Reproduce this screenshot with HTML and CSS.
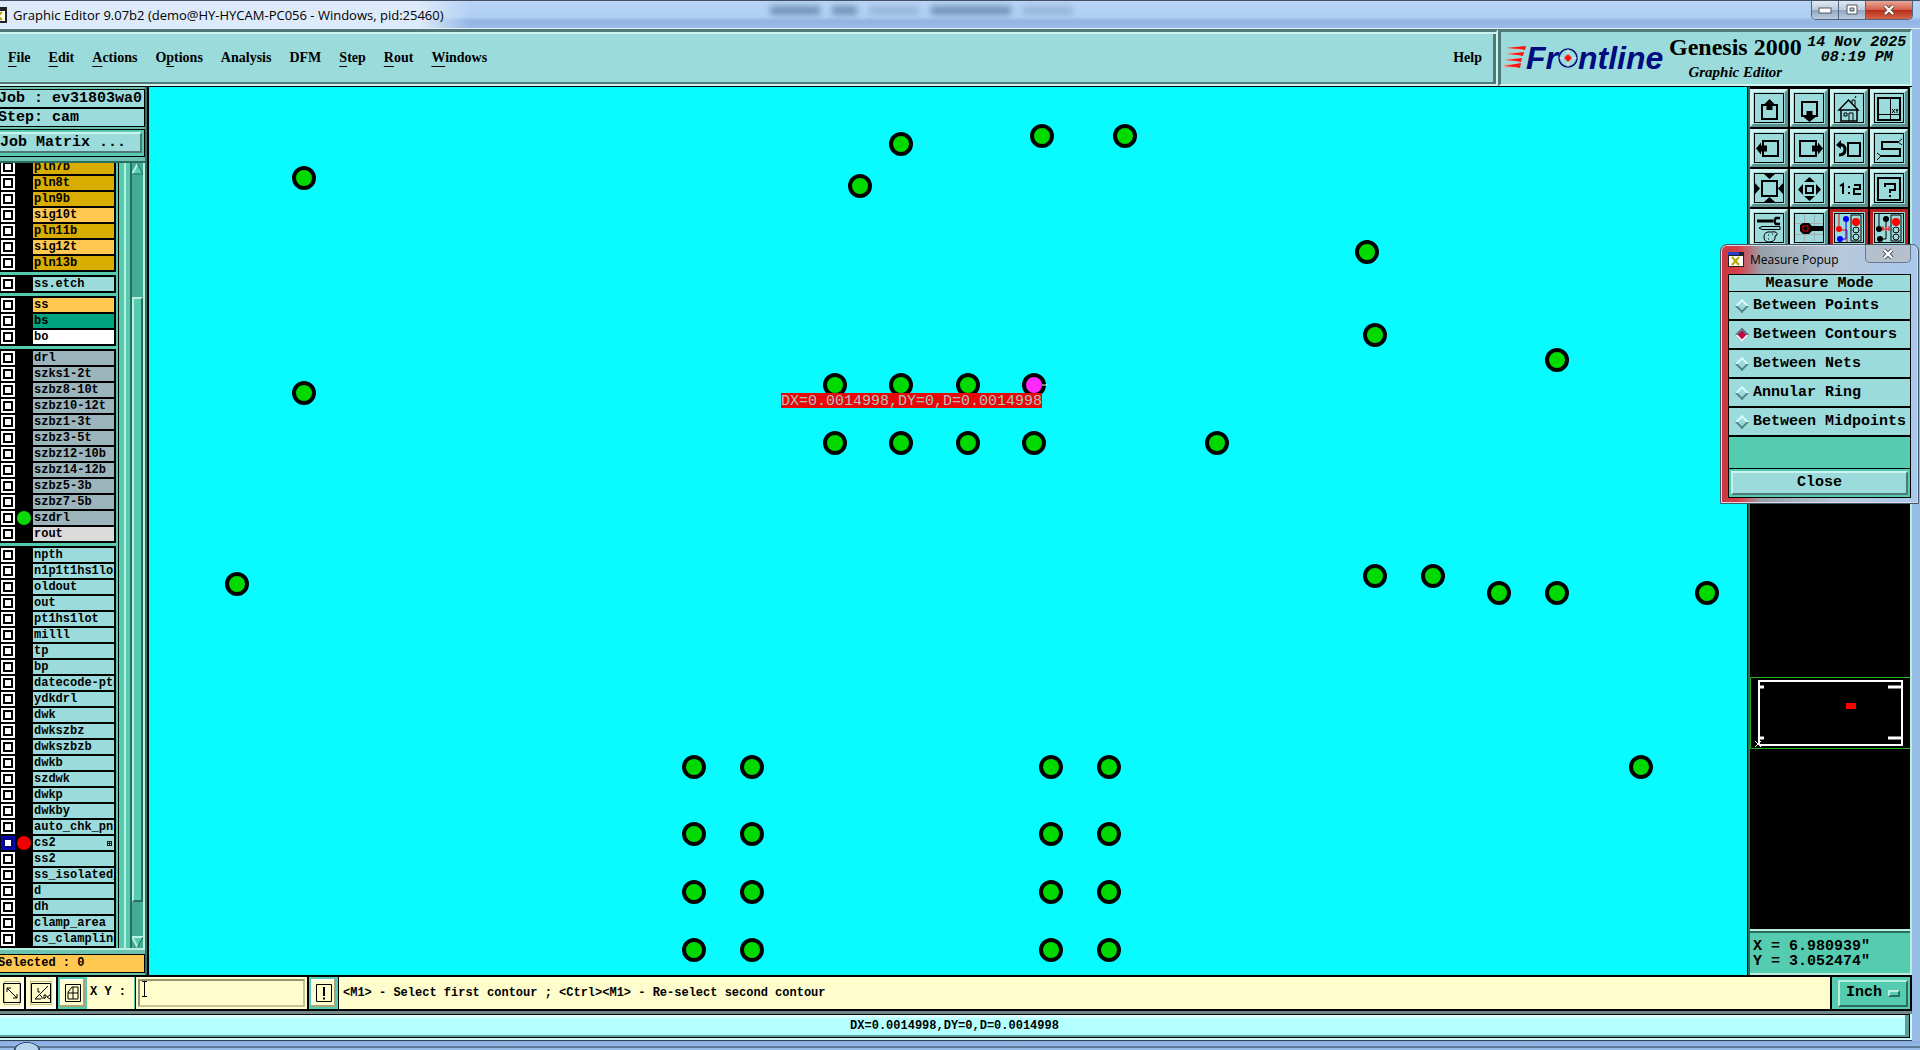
FILE: index.html
```html
<!DOCTYPE html>
<html lang="en">
<head>
<meta charset="utf-8">
<title>Graphic Editor 9.07b2</title>
<link rel="stylesheet" href="styles.css">
</head>
<body>
<div class="titlebar">
  <svg class="appicon" width="16" height="16"><rect width="16" height="16" fill="#222"/><rect x="1" y="4" width="13" height="10" fill="#fff"/><path d="M3 5l8 8M11 5l-8 8" stroke="#b8a800" stroke-width="2"/></svg>
  <h1>Graphic Editor 9.07b2 (demo@HY-HYCAM-PC056 - Windows, pid:25460)</h1>
  <div class="haze"><i class="w50"></i><i class="w25"></i><i class="w50 faint"></i><i class="w80"></i><i class="w50 faint"></i></div>
  <div class="winbtns">
    <button aria-label="Minimize"><svg width="14" height="12"><rect x="1" y="4" width="12" height="5" fill="#fff" stroke="#556"/></svg></button>
    <button aria-label="Maximize"><svg width="14" height="12"><path d="M2 1h10v9H2zM5 4v3h4V4z" fill="#fff" fill-rule="evenodd" stroke="#556"/></svg></button>
    <button class="x" aria-label="Close window"><svg width="14" height="12"><path d="M3 2l8 8M11 2l-8 8" stroke="#543" stroke-width="4"/><path d="M3 2l8 8M11 2l-8 8" stroke="#fff" stroke-width="2.4"/></svg></button>
  </div>
</div>
<header>
  <nav>
    <button><u>F</u>ile</button><button><u>E</u>dit</button><button><u>A</u>ctions</button><button>O<u>p</u>tions</button><button>Analysis</button><button>DFM</button><button><u>S</u>tep</button><button><u>R</u>out</button><button><u>W</u>indows</button><button class="help">Help</button>
  </nav>
  <div class="brand">
    <div class="logo">
      <svg class="speed" width="22" height="24"><g fill="#f8a090"><path d="M5 1h14v3H9zM3 6h14v3H3zM1 12h14v3H1zM0 18h14v4H0z" opacity=".45"/></g><path d="M2 2l20-2-1 4-5-1zM4 8l16-2-1 4-5-1zM2 14l16-2-1 4-5-1zM0 20l17-3-1 5-5-1z" fill="#f11"/></svg><span>Fr</span><svg class="target" width="20" height="20" role="img" aria-label="o"><circle cx="10" cy="10" r="9" fill="none" stroke="#00107c" stroke-width="1.5"/><path d="M10 1v18M1 10h18" stroke="#fff" opacity=".6"/><path d="M10 6l4 4-4 4-4-4z" fill="#f11"/></svg><span>ntline</span>
    </div>
    <div class="product"><strong>Genesis 2000</strong><em>Graphic Editor</em></div>
    <div class="clock">14 Nov 2025<br>08:19 PM</div>
  </div>
</header>
<main>
  <aside class="left">
    <div class="cell">Job : ev31803wa0</div>
    <div class="cell">Step: cam</div>
    <div class="matrix"><button>Job Matrix ...</button></div>
    <div class="layers">
      <div class="list">
        <div class="group">
          <label><input type="checkbox"><i></i><span class="pln">pln7b</span></label>
          <label><input type="checkbox"><i></i><span class="pln">pln8t</span></label>
          <label><input type="checkbox"><i></i><span class="pln">pln9b</span></label>
          <label><input type="checkbox"><i></i><span class="sig">sig10t</span></label>
          <label><input type="checkbox"><i></i><span class="pln">pln11b</span></label>
          <label><input type="checkbox"><i></i><span class="sig">sig12t</span></label>
          <label><input type="checkbox"><i></i><span class="pln">pln13b</span></label>
        </div>
        <div class="group">
          <label><input type="checkbox"><i></i><span>ss.etch</span></label>
        </div>
        <div class="group">
          <label><input type="checkbox"><i></i><span class="sig">ss</span></label>
          <label><input type="checkbox"><i></i><span class="mask">bs</span></label>
          <label><input type="checkbox"><i></i><span class="white">bo</span></label>
        </div>
        <div class="group">
          <label><input type="checkbox"><i></i><span class="drill">drl</span></label>
          <label><input type="checkbox"><i></i><span class="drill">szks1-2t</span></label>
          <label><input type="checkbox"><i></i><span class="drill">szbz8-10t</span></label>
          <label><input type="checkbox"><i></i><span class="drill">szbz10-12t</span></label>
          <label><input type="checkbox"><i></i><span class="drill">szbz1-3t</span></label>
          <label><input type="checkbox"><i></i><span class="drill">szbz3-5t</span></label>
          <label><input type="checkbox"><i></i><span class="drill">szbz12-10b</span></label>
          <label><input type="checkbox"><i></i><span class="drill">szbz14-12b</span></label>
          <label><input type="checkbox"><i></i><span class="drill">szbz5-3b</span></label>
          <label><input type="checkbox"><i></i><span class="drill">szbz7-5b</span></label>
          <label><input type="checkbox"><i class="green"></i><span class="drill">szdrl</span></label>
          <label><input type="checkbox"><i></i><span class="rout">rout</span></label>
        </div>
        <div class="group">
          <label><input type="checkbox"><i></i><span>npth</span></label>
          <label><input type="checkbox"><i></i><span>n1p1t1hs1lot</span></label>
          <label><input type="checkbox"><i></i><span>oldout</span></label>
          <label><input type="checkbox"><i></i><span>out</span></label>
          <label><input type="checkbox"><i></i><span>pt1hs1lot</span></label>
          <label><input type="checkbox"><i></i><span>milll</span></label>
          <label><input type="checkbox"><i></i><span>tp</span></label>
          <label><input type="checkbox"><i></i><span>bp</span></label>
          <label><input type="checkbox"><i></i><span>datecode-pto</span></label>
          <label><input type="checkbox"><i></i><span>ydkdrl</span></label>
          <label><input type="checkbox"><i></i><span>dwk</span></label>
          <label><input type="checkbox"><i></i><span>dwkszbz</span></label>
          <label><input type="checkbox"><i></i><span>dwkszbzb</span></label>
          <label><input type="checkbox"><i></i><span>dwkb</span></label>
          <label><input type="checkbox"><i></i><span>szdwk</span></label>
          <label><input type="checkbox"><i></i><span>dwkp</span></label>
          <label><input type="checkbox"><i></i><span>dwkby</span></label>
          <label><input type="checkbox"><i></i><span>auto_chk_pnl</span></label>
          <label><input type="checkbox" checked><i class="red"></i><span class="snap">cs2<svg width="5" height="5"><path d="M0 .5h5M0 2.5h5M0 4.5h5M.5 0v5M2.5 0v5M4.5 0v5" stroke="#000" stroke-width=".8"/></svg></span></label>
          <label><input type="checkbox"><i></i><span>ss2</span></label>
          <label><input type="checkbox"><i></i><span>ss_isolated_</span></label>
          <label><input type="checkbox"><i></i><span>d</span></label>
          <label><input type="checkbox"><i></i><span>dh</span></label>
          <label><input type="checkbox"><i></i><span>clamp_area</span></label>
          <label><input type="checkbox"><i></i><span>cs_clampline</span></label>
        </div>
      </div>
      <div class="rails"></div>
      <div class="scroll">
        <svg width="11" height="12"><path d="M5.500 1L0 11h11z" fill="#55ccb0"/><path d="M5.500 1L0 11" stroke="#b8f4e4" stroke-width="2"/><path d="M0 11h11L5.500 1" fill="none" stroke="#226a5c"/></svg>
        <div class="thumb"></div>
        <svg width="11" height="12"><path d="M0 1h11L5.500 11z" fill="#55ccb0"/><path d="M5.500 11L0 1h11" fill="none" stroke="#b8f4e4" stroke-width="2"/><path d="M11 1L5.500 11" stroke="#226a5c"/></svg>
      </div>
    </div>
    <div class="cell selected">Selected : 0</div>
  </aside>
  <section class="canvas">
    <svg class="pads" width="100%" height="100%">
      <g class="pad">
        <circle cx="155" cy="91" r="10"/><circle cx="752" cy="57" r="10"/><circle cx="711" cy="99" r="10"/><circle cx="893" cy="49" r="10"/><circle cx="976" cy="49" r="10"/>
        <circle cx="1218" cy="165" r="10"/><circle cx="1226" cy="248" r="10"/><circle cx="1408" cy="273" r="10"/><circle cx="155" cy="306" r="10"/><circle cx="88" cy="497" r="10"/>
        <circle cx="686" cy="298" r="10"/><circle cx="752" cy="298" r="10"/><circle cx="819" cy="298" r="10"/><circle class="picked" cx="885" cy="298" r="10"/>
        <circle cx="686" cy="356" r="10"/><circle cx="752" cy="356" r="10"/><circle cx="819" cy="356" r="10"/><circle cx="885" cy="356" r="10"/><circle cx="1068" cy="356" r="10"/>
        <circle cx="1226" cy="489" r="10"/><circle cx="1284" cy="489" r="10"/><circle cx="1350" cy="506" r="10"/><circle cx="1408" cy="506" r="10"/><circle cx="1558" cy="506" r="10"/>
        <circle cx="545" cy="680" r="10"/><circle cx="603" cy="680" r="10"/><circle cx="902" cy="680" r="10"/><circle cx="960" cy="680" r="10"/><circle cx="1492" cy="680" r="10"/>
        <circle cx="545" cy="747" r="10"/><circle cx="603" cy="747" r="10"/><circle cx="902" cy="747" r="10"/><circle cx="960" cy="747" r="10"/>
        <circle cx="545" cy="805" r="10"/><circle cx="603" cy="805" r="10"/><circle cx="902" cy="805" r="10"/><circle cx="960" cy="805" r="10"/>
        <circle cx="545" cy="863" r="10"/><circle cx="603" cy="863" r="10"/><circle cx="902" cy="863" r="10"/><circle cx="960" cy="863" r="10"/>
      </g>
      <path d="M893 298h5" stroke="#fff"/>
    </svg>
    <output class="measure">DX=0.0014998,DY=0,D=0.0014998</output>
  </section>
  <aside class="right">
    <div class="tools">
      <button aria-label="Pan up"><svg viewBox="1 1 28 28"><path d="M8 12h15v14H8z" fill="none" stroke="#000" stroke-width="2"/><path d="M15.500 6l6 6h-3v5h-6v-5h-3z"/></svg></button>
      <button aria-label="Pan down"><svg viewBox="1 1 28 28"><path d="M8 9h15v14H8z" fill="none" stroke="#000" stroke-width="2"/><path d="M15.500 29l-6-5h3v-6h6v6h3z"/></svg></button>
      <button aria-label="Home"><svg viewBox="1 1 28 28" fill="none" stroke="#000"><path d="M5 17L14.500 7 24 17zM7 17v11h16V17" stroke-width="1.500"/><path d="M15 28v-8h4v8M10 20h3v3h-3zM18 10V7h3v7M21 5l1-2"/></svg></button>
      <button aria-label="Zoom XY"><svg viewBox="1 1 28 28" fill="none" stroke="#000"><path d="M4 5h22v22H4z" stroke-width="2"/><path d="M16.500 5v22M4 21.500h22M18 16l3 4M21 16l-3 4M22 16l1 2 1-2M23 18v2"/></svg></button>
      <button aria-label="Pan left"><svg viewBox="1 1 28 28"><path d="M9 8h15v15H9z" fill="none" stroke="#000" stroke-width="2"/><path d="M2 15.500l5-6v3h6v6H7v3z"/></svg></button>
      <button aria-label="Pan right"><svg viewBox="1 1 28 28"><path d="M6 8h16v15H6z" fill="none" stroke="#000" stroke-width="2"/><path d="M29 15.500l-5-6v3h-6v6h6v3z"/></svg></button>
      <button aria-label="Previous view"><svg viewBox="1 1 28 28" fill="none" stroke="#000"><path d="M14 10h12v13H14z" stroke-width="2"/><path d="M5 12q6-1 6 4.500T5 22" stroke-width="3"/><path d="M2 12l5-5v9z" fill="#000" stroke="none"/></svg></button>
      <button aria-label="Snake"><svg viewBox="1 1 28 28" fill="none" stroke="#000"><path d="M24 9H8v7h18v7H7" stroke-width="2"/><path d="M28 6l-4 3 4 3M3 20l4 3-4 4"/></svg></button>
      <button aria-label="Zoom out"><svg viewBox="1 1 28 28"><path d="M8 8h15v15H8z" fill="none" stroke="#000" stroke-width="2"/><path d="M10 1h11l-5.500 5zM10 29h11l-5.500-5zM1 10v11l5-5.500zM29 10v11l-5-5.500z"/></svg></button>
      <button aria-label="Zoom in"><svg viewBox="1 1 28 28"><path d="M12 13h7v7h-7z" fill="none" stroke="#000" stroke-width="2"/><path d="M10 9h11l-5.500-5zM10 23h11l-5.500 5zM9 11v11l-5-5.500zM22 11v11l5-5.500z"/></svg></button>
      <button class="ratio" aria-label="Scale 1:2"><svg viewBox="1 1 28 28" fill="none" stroke="#000" stroke-width="2"><path d="M6 13l3-2v10M20 12h6v4h-6v5h7M15 13v2M15 19v2"/></svg></button>
      <button aria-label="Help"><svg viewBox="1 1 28 28" fill="none" stroke="#000" stroke-width="2"><path d="M4 5h22v22H4zM11 14v-3h10v6h-5v3M16 22v2"/></svg></button>
      <button aria-label="Setup"><svg viewBox="1 1 28 28" fill="none" stroke="#000"><path d="M3 8h16" stroke-width="3"/><path d="M26 5h-4q-3 3 0 6h4" stroke-width="2.500"/><path d="M5 15l3-1.500h18v3H8z"/><path d="M10 24q0-6 7-5 7-1 6 3-3 0-2 4-1 3-6 3-5 0-5-5zM14 22h1M18 21h1M14 26h1"/></svg></button>
      <button aria-label="Snap"><svg viewBox="1 1 28 28"><path d="M10.500 1v28M20.500 1v28M1 10.500h28M1 21.500h28" stroke="#a4b0b0"/><path d="M6 12l3-2h6l3 3h11v5H18l-3 3H9l-3-3z"/><path d="M9 13h5v5H9z" fill="none" stroke="#f00"/></svg></button>
      <button class="hot" aria-label="Net check"><svg viewBox="1 1 28 28" fill="none"><path d="M5 1v16h8v12" stroke="#f00"/><path d="M12 6v20H6" stroke="#00f"/><g fill="#00f"><circle cx="12" cy="6" r="3"/><circle cx="6" cy="26" r="3"/></g><circle cx="5" cy="16" r="3" fill="#f00"/><path d="M17 2h10v26H17z" stroke="#000"/><circle cx="22" cy="9" r="4" fill="#f00"/><circle cx="22" cy="17" r="3" stroke="#000"/><circle cx="22" cy="24" r="3" stroke="#000"/></svg></button>
      <button class="hot" aria-label="Distance check"><svg viewBox="1 1 28 28" fill="none"><path d="M5 1v14M12 6v8M12 18v8H6" stroke="#000"/><path d="M9 18v-5m3 5v-5m3 5v-5M8 16h7" stroke="#f00"/><g fill="#000"><circle cx="12" cy="6" r="3"/><circle cx="6" cy="26" r="3"/><circle cx="5" cy="16" r="3"/></g><path d="M17 2h10v26H17z" stroke="#000"/><circle cx="22" cy="9" r="4" fill="#f00"/><circle cx="22" cy="17" r="3" stroke="#000"/><circle cx="22" cy="24" r="3" stroke="#000"/></svg></button>
    </div>
    <div class="navigator">
      <svg width="160" height="72"><path d="M160 .5H.5v71H160" fill="none" stroke="#1fb41f"/><path d="M9 67V4h143v64H9" fill="none" stroke="#fff" stroke-width="2"/><path d="M8 10h6M138 10h14M8 61h6M138 61h14" stroke="#fff" stroke-width="3"/><path d="M5 64l6 6M11 64l-6 6" stroke="#fff"/><rect x="96" y="26" width="10" height="6" fill="#f00"/></svg>
    </div>
    <div class="xy">X = 6.980939"<br>Y = 3.052474"</div>
  </aside>
</main>
<div class="cmdbar">
  <button class="flat" aria-label="Line mode"><svg width="18" height="20"><path d="M.5.5h17v19H.5z M4 5l10 10M4 9V5h4M14 11v4h-4" fill="none" stroke="#000"/></svg></button>
  <button class="flat" aria-label="Angle mode"><svg width="20" height="20"><path d="M.5.5h19v19H.5zM17 3L4 16h6M7 5v4h2M9 12q3 2 2 4M13 12v4l2-2v-2zM19 12l-3 2 3 2" fill="none" stroke="#000"/></svg></button>
  <button class="raised" aria-label="Grid"><svg width="16" height="18"><path d="M.5.5h15v17H.5zM3 8l4-5h6v12H3zM8 3v12M3 9h10" fill="none" stroke="#000"/></svg></button>
  <label for="xy">X Y :</label>
  <div class="field"><input id="xy" type="text"><svg class="caret" width="7" height="16"><path d="M1 .5h5M3.500 0v15M1 15.500h5" stroke="#000"/></svg></div>
  <button class="raised" aria-label="Alert"><svg width="16" height="18"><path d="M.5.5h15v17H.5z" fill="none" stroke="#000"/><path d="M8 3v9M8 13.500v2" stroke="#000" stroke-width="2"/></svg></button>
  <p>&lt;M1&gt; - Select first contour ; &lt;Ctrl&gt;&lt;M1&gt; - Re-select second contour</p>
  <div class="unit"><select aria-label="Unit"><option>Inch</option><option>mm</option></select><i></i></div>
</div>
<footer><div class="status">DX=0.0014998,DY=0,D=0.0014998</div></footer>
<div class="orb"></div>

<section class="popup">
  <div class="ptitle"><svg width="16" height="15"><rect width="16" height="15" fill="#222"/><rect width="11" height="3" fill="#24c"/><rect x="1" y="4" width="14" height="10" fill="#fff"/><path d="M4 5l7 8M11 5l-7 8" stroke="#b8a800" stroke-width="2"/></svg><h2>Measure Popup</h2><button aria-label="Close popup"><svg width="14" height="12"><path d="M3 2l8 8M11 2l-8 8" stroke="#445" stroke-width="4"/><path d="M3 2l8 8M11 2l-8 8" stroke="#fff" stroke-width="2.400"/></svg></button></div>
  <div class="pbody">
    <fieldset>
      <legend>Measure Mode</legend>
      <label><input type="radio" name="m">Between Points</label>
      <label><input type="radio" name="m" checked>Between Contours</label>
      <label><input type="radio" name="m">Between Nets</label>
      <label><input type="radio" name="m">Annular Ring</label>
      <label><input type="radio" name="m">Between Midpoints</label>
    </fieldset>
    <div class="closebox"><button>Close</button></div>
  </div>
</section>
</body>
</html>
```
FILE: styles.css
```css
* { box-sizing: border-box; }
:root {
  --panel: #9cdbdb;
  --light: #ccf4f0;
  --dark: #507878;
  --green: #55ccb0;
  --glight: #b8f0e0;
  --gdark: #2a6e60;
  --cream: #fffdcc;
  --mono: "Liberation Mono", "Courier New", monospace;
  --serif: "Liberation Serif", "Times New Roman", serif;
  --ui: "Open Sans", "Segoe UI", sans-serif;
}
body {
  margin: 0;
  height: 100vh;
  display: flex;
  flex-direction: column;
  overflow: hidden;
  position: relative;
  background: #98bde6;
  font: bold 15px/18px var(--mono);
  color: #000;
}
button { font: inherit; color: inherit; margin: 0; padding: 0; border: 0; cursor: pointer; }
svg { display: block; }

/* window title */
.titlebar {
  flex: none;
  height: 29px;
  display: flex;
  align-items: center;
  border-top: 1px solid #445066;
  border-bottom: 1px solid #e4f0fa;
  background:
    linear-gradient(90deg, #dceafa 0, #dceafa 420px, transparent 470px),
    linear-gradient(#b8d4f6 0, #b0cff4 16px, #94b4e2 20px, #98bce8);
}
.appicon { flex: none; margin-left: -9px; }
.titlebar h1 { flex: 8 1 0; margin: 0 0 0 6px; font: 13px/24px var(--ui); white-space: nowrap; }
.haze { flex: 11 1 0; height: 24px; display: flex; gap: 12px; filter: blur(3px); }
.haze i { height: 9px; margin-top: 3px; background: #58789c; opacity: .7; }
.haze .faint { opacity: .3; }
.haze .w25 { width: 25px; }
.haze .w50 { width: 50px; }
.haze .w80 { width: 80px; }
.winbtns { display: flex; align-self: flex-start; margin-right: 7px; border: 1px solid #53647e; border-top: 0; border-radius: 0 0 5px 5px; overflow: hidden; }
.winbtns button { width: 27px; height: 18px; display: grid; place-items: center; border-right: 1px solid #53647e; background: linear-gradient(#e0e9f3, #bccbdc 48%, #8fa3bc 50%, #bccde0); }
.winbtns .x { width: 46px; border: 0; background: linear-gradient(#eaa79a, #d2604c 48%, #b52c18 50%, #d8644c); }

/* menu and brand */
header { flex: none; display: flex; height: 58px; margin-right: 8px; border-bottom: 1px solid #000; background: var(--panel); }
nav { flex: 1; display: flex; align-items: center; gap: 18px; padding-left: 8px; border-top: 3px solid var(--dark); border-right: 2px solid var(--light); border-bottom: 2px solid var(--light); box-shadow: inset 0 2px var(--light), inset -3px -2px var(--dark); font: bold 14px/18px var(--serif); }
nav button { background: none; }
nav u { text-decoration: underline; text-underline-offset: 4px; }
.help { margin-left: auto; margin-right: 14px; }
.brand { flex: none; width: 414px; display: flex; padding-left: 3px; border: 3px solid var(--dark); border-right: 2px solid var(--light); border-bottom: 2px solid var(--light); }
.logo { display: flex; align-items: center; font: italic bold 32px/48px "Liberation Sans", Arial, sans-serif; color: #000c80; }
.product { display: flex; flex-direction: column; align-items: center; margin-left: 4px; width: 136px; font-family: var(--serif); white-space: nowrap; }
.product strong { font-size: 24px; line-height: 30px; }
.product em { font-size: 15px; line-height: 20px; }
.clock { flex: 1; text-align: center; font-style: italic; line-height: 15px; padding-top: 3px; white-space: nowrap; }

main { flex: 1; min-height: 0; display: flex; margin-right: 8px; }

/* layer panel */
.left { flex: none; width: 149px; display: flex; flex-direction: column; padding-top: 2px; background: #6cc4b0; border-right: 2px solid #000; white-space: nowrap; overflow: hidden; box-shadow: inset -2px 0 #2c7466; }
.cell { flex: none; height: 19px; width: 145px; line-height: 18px; text-indent: -2px; background: var(--panel); border: 1px solid #000; border-left: 0; }
.matrix { flex: none; width: 145px; margin: 2px 0 4px; padding: 2px 2px 3px 0; border: 1px solid #000; border-left: 0; background: var(--green); }
.matrix button { display: block; width: 100%; height: 21px; text-align: left; background: var(--panel); border: 2px solid var(--dark); border-left: 0; border-top-color: var(--light); line-height: 18px; }
.layers { flex: 1; min-height: 0; display: flex; width: 145px; border-top: 2px solid var(--gdark); border-bottom: 2px solid var(--glight); background: var(--green); }
.list { width: 116px; display: flex; flex-direction: column; justify-content: flex-end; gap: 3px; overflow: hidden; font-size: 12px; line-height: 14px; }
.group { flex: none; display: flex; flex-direction: column; gap: 2px; padding: 2px 2px 2px 1px; background: #000; }
.group label { display: flex; height: 14px; }
.group input { flex: none; appearance: none; width: 14px; height: 14px; margin: 0; border: 2px solid #fff; background: #fff; box-shadow: inset 0 0 0 2px #000; }
.group input:checked { border-color: #0808b0; box-shadow: inset 0 0 0 2px #000080; }
.group i { flex: none; width: 14px; height: 14px; margin: 0 2px; border-radius: 7px; }
.group .green { background: #0bd90b; }
.group .red { background: #f00000; }
.group span { flex: 1; padding-left: 1px; overflow: hidden; background: var(--panel); }
.group .pln { background: #d8ac00; }
.group .sig { background: #ffc850; }
.group .mask { background: #00a480; }
.group .white { background: #fff; }
.group .drill { background: #9cb4bc; }
.group .rout { background: #dadada; }
.group .snap { display: flex; justify-content: space-between; align-items: center; padding-right: 2px; }
.rails { width: 14px; margin-left: 2px; border-left: 1px solid #000; border-right: 2px solid var(--gdark); background: linear-gradient(90deg, var(--green) 5px, var(--glight) 5px 7px, var(--green) 7px); }
.scroll { flex: 1; display: flex; flex-direction: column; justify-content: space-between; border-right: 2px solid var(--glight); background: #44ac94; }
.thumb { flex: none; height: 77%; margin-top: 108px; border: 2px solid var(--gdark); border-top-color: var(--glight); border-left-color: var(--glight); background: var(--green); }
.scroll svg:last-child { margin-top: 20px; }
.selected { margin: 4px 0 2px; background: #ffc850; font-size: 12px; line-height: 17px; }

/* artwork */
.canvas { flex: 1; min-width: 0; position: relative; overflow: hidden; background: #08fcff; }
.pads { position: absolute; inset: 0; }
.pad circle { fill: #00da00; stroke: #000; stroke-width: 4; }
.pad .picked { fill: #ff28ff; }
.measure { position: absolute; left: 632px; top: 306px; height: 15px; line-height: 17px; color: #b0c0c0; background: #e80808; font-weight: normal; }

/* tools and navigator */
.right { flex: none; width: 165px; display: flex; flex-direction: column; border-left: 1px solid #000; border-right: 2px solid var(--glight); background: #000; box-shadow: inset 2px 0 var(--gdark); padding-left: 2px; }
.tools { display: grid; grid-template-columns: repeat(4, 38px); gap: 2px; padding-top: 2px; }
.tools button { height: 38px; padding: 1px; background: var(--panel); border: 3px solid #5c9090; border-top-color: var(--light); border-left-color: var(--light); }
.tools svg { width: 30px; height: 30px; border: 1px solid #000; }
.tools .hot { border-color: #b82020; }
.navigator { flex: 1; padding-top: 430px; background: #000; min-height: 0; }
.navigator svg { width: 100%; }
.xy { height: 44px; padding: 6px 0 0 3px; line-height: 15px; background: var(--green); border-top: 2px solid var(--gdark); border-bottom: 2px solid var(--glight); box-shadow: 0 -2px var(--glight); margin-top: 2px; }

/* command line */
.cmdbar { flex: none; height: 36px; margin-right: 8px; display: flex; border: 2px solid #000; border-left: 0; background: var(--cream); font-size: 12px; }
.cmdbar button { display: grid; place-items: center; background: var(--cream); }
.flat { width: 26px; border: 1px solid #000; border-width: 0 2px 0 0; box-shadow: inset -2px -2px #fff, inset 0 0 0 4px var(--cream), inset 0 0 0 5px #c0bc90; }
.flat + .flat { width: 32px; }
.cmdbar .raised { width: 29px; border: 2px solid var(--green); box-shadow: inset -2px -2px #a8a478, inset 2px 2px #fffff0; }
.cmdbar label { width: 48px; padding-left: 3px; line-height: 30px; border-right: 1px solid var(--green); white-space: nowrap; font-size: 12px; }
.field { width: 174px; padding: 2px; border-left: 1px solid #000; border-right: 2px solid #000; position: relative; }
.field input { display: block; width: 100%; height: 100%; border: 2px solid #c8c498; border-top-color: #989470; border-left-color: #989470; background: none; font: inherit; outline: 0; padding: 0 4px; }
.caret { position: absolute; left: 5px; top: 4px; }
.cmdbar p { flex: 1; margin: 0; padding-left: 4px; border-left: 1px solid #000; line-height: 32px; white-space: nowrap; }
.unit { width: 80px; display: flex; align-items: center; padding: 2px 2px 2px 6px; border-left: 2px solid #000; background: var(--green); position: relative; }
.unit select { appearance: none; width: 100%; height: 27px; padding: 0 6px; border: 2px solid var(--gdark); border-top-color: var(--glight); border-left-color: var(--glight); border-radius: 0; background: var(--green); font: bold 15px/18px var(--mono); color: #000; }
.unit i { position: absolute; right: 10px; top: 13px; width: 12px; height: 7px; border: 2px solid var(--gdark); border-top-color: var(--glight); border-left-color: var(--glight); pointer-events: none; }
footer { flex: none; height: 30px; margin: 0 8px 0 0; padding: 0 2px 2px 0; background: #d0f8f8; border-top: 3px solid #708888; border-bottom: 1px solid #304050; }
.status { height: 100%; text-align: center; font-size: 12px; line-height: 22px; background: #b4ffff; border: 1px solid #000; border-left: 0; box-shadow: inset -4px -2px #5c9c9c, inset 0 3px #d8ffff; }
.orb { flex: none; height: 9px; background: radial-gradient(ellipse 13px 8px at 27px 9px, #b8d4ec 85%, #34506c 90% 98%, transparent 100%), linear-gradient(#88acde, #98bce8 5px, #26384c 6px, #98bce8 7px); }

/* measure popup */
.popup { position: absolute; top: 244px; right: 1px; width: 199px; padding: 0 7px 5px; border: 1px solid #44586c; border-radius: 7px 7px 0 0; background: linear-gradient(90deg, #c83840 0, #d8404c 18px, #98a0a8 40px, #b8c8dc 120px, #a8c8ec); box-shadow: inset 0 0 0 1px #d8dce4; }
.ptitle { height: 29px; display: flex; align-items: center; gap: 6px; }
.ptitle h2 { flex: 1; margin: 0; font: 12px/24px var(--ui); white-space: nowrap; }
.ptitle button { align-self: flex-start; width: 46px; height: 18px; display: grid; place-items: center; border: 1px solid #68788c; border-top: 0; border-radius: 0 0 5px 5px; background: #b4c0cc; }
.pbody { border: 1px solid #000; background: var(--green); }
fieldset { margin: 0; padding: 0; border: 0; display: flex; flex-direction: column; background: #000; }
legend { float: left; width: 100%; height: 17px; padding: 0; text-align: center; line-height: 17px; background: var(--panel); border-bottom: 1px solid #000; }
fieldset label { height: 29px; display: flex; align-items: center; gap: 6px; padding-left: 8px; background: var(--panel); border-bottom: 2px solid #000; white-space: nowrap; }
fieldset input { appearance: none; flex: none; width: 10px; height: 10px; margin: 0; transform: rotate(45deg); border: 2px solid #508484; border-top-color: #d8fcfc; border-left-color: #d8fcfc; }
fieldset input:checked { background: #c80048; border-color: #d8fcfc; border-top-color: #508484; border-left-color: #508484; }
.closebox { margin-top: 31px; padding: 2px; border-top: 1px solid #000; }
.closebox button { display: block; width: 100%; height: 24px; background: var(--panel); border: 2px solid var(--dark); border-top-color: var(--light); border-left-color: var(--light); }
```
